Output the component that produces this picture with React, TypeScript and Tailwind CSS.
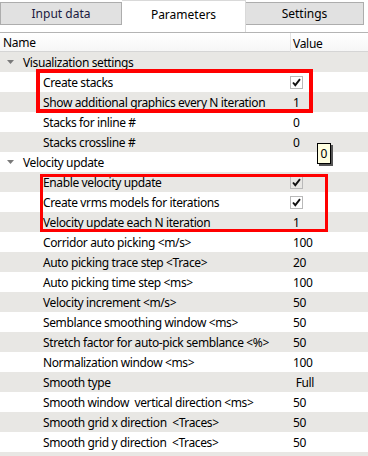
const font = { fontFamily: '"Noto Sans", "Liberation Sans", sans-serif' };

type Row =
  | { kind: "section"; label: string }
  | { kind: "item"; label: string; value?: string; checked?: boolean };

const rows: Row[] = [
  { kind: "section", label: "Visualization settings" },
  { kind: "item", label: "Create stacks", checked: true },
  { kind: "item", label: "Show additional graphics every N iteration", value: "1" },
  { kind: "item", label: "Stacks for inline #", value: "0" },
  { kind: "item", label: "Stacks crossline #", value: "0" },
  { kind: "section", label: "Velocity update" },
  { kind: "item", label: "Enable velocity update", checked: true },
  { kind: "item", label: "Create vrms models for iterations", checked: true },
  { kind: "item", label: "Velocity update each N iteration", value: "1" },
  { kind: "item", label: "Corridor auto picking <m/s>", value: "100" },
  { kind: "item", label: "Auto picking trace step <Trace>", value: "20" },
  { kind: "item", label: "Auto picking time step <ms>", value: "100" },
  { kind: "item", label: "Velocity increment <m/s>", value: "50" },
  { kind: "item", label: "Semblance smoothing window <ms>", value: "50" },
  { kind: "item", label: "Stretch factor for auto-pick semblance <%>", value: "50" },
  { kind: "item", label: "Normalization window <ms>", value: "100" },
  { kind: "item", label: "Smooth type", value: " Full" },
  { kind: "item", label: "Smooth window  vertical direction <ms>", value: "50" },
  { kind: "item", label: "Smooth grid x direction  <Traces>", value: "50" },
  { kind: "item", label: "Smooth grid y direction  <Traces>", value: "50" },
];

function Check() {
  return (
    <div className="-mt-[2px] flex h-[13px] w-[13px] items-center justify-center border border-[#b9b9b9]">
      <svg width="11" height="11" viewBox="0 0 11 11">
        <path d="M2 5.5 L4.3 8.2 L9 2.2" fill="none" stroke="#111" strokeWidth="1.9" />
      </svg>
    </div>
  );
}

export default function App() {
  return (
    <div className="relative h-[456px] w-[368px] overflow-hidden bg-white text-[12px] text-black" style={font}>
      {/* tabs */}
      <div className="flex h-[32px] items-start">
        <div className="mt-[2px] flex h-[23px] w-[122px] items-center justify-center border border-[#adadad] bg-[#e1e1e1] text-[#1a1a40]">
          Input data
        </div>
        <div className="flex h-[32px] w-[124px] items-start justify-center border-t border-r border-[#d9d9d9] bg-white pt-[5px]">
          Parameters
        </div>
        <div className="mt-[2px] flex h-[23px] w-[118px] items-center justify-center border border-l-0 border-[#adadad] bg-[#e1e1e1]">
          Settings
        </div>
      </div>

      {/* header */}
      <div className="flex h-[20px] items-center border-t border-b border-t-[#b4b4b4] border-b-[#d5d5d5] bg-gradient-to-b from-white to-[#f6f6f6] pt-[2px] tracking-[-0.3px]">
        <div className="w-[290px] pl-[3px]">Name</div>
        <div className="-mt-[2px] h-[19px] border-l border-[#e3e3e3] pt-[2px] pl-[2px] leading-[17px]">Value</div>
      </div>

      {/* rows */}
      <div className="flex flex-col tracking-[-0.38px]">
        {rows.map((r, i) => (
          <div
            key={i}
            className={`flex h-[20px] items-center pt-[2px] ${i % 2 === 0 ? "bg-[#e8e7e4]" : "bg-white"}`}
          >
            {r.kind === "section" ? (
              <>
                <svg width="23" height="20" viewBox="0 0 23 20" className="-mt-[2px] shrink-0">
                  <path d="M7 8 L14 8 L10.5 12 Z" fill="#7a7a7a" />
                </svg>
                <span>{r.label}</span>
              </>
            ) : (
              <>
                <span className="w-[290px] shrink-0 pl-[43px] whitespace-pre">{r.label}</span>
                {r.checked ? <Check /> : <span className="pl-[3px] whitespace-pre">{r.value}</span>}
              </>
            )}
          </div>
        ))}
        <div className="h-[4px] bg-[#e8e7e4]" />
      </div>

      {/* red highlight frames */}
      <div className="absolute top-[69px] left-[36px] h-[44px] w-[277px] border-4 border-[#ff0000]" />
      <div className="absolute top-[174px] left-[40px] h-[58px] w-[288px] border-[3px] border-[#ff0000]" />

      {/* tooltip */}
      <div className="absolute top-[143px] left-[317px] flex h-[21px] w-[14px] items-center justify-center border border-black bg-[#ffffe1] shadow-[2px_2px_0_#555]">
        0
      </div>
    </div>
  );
}
